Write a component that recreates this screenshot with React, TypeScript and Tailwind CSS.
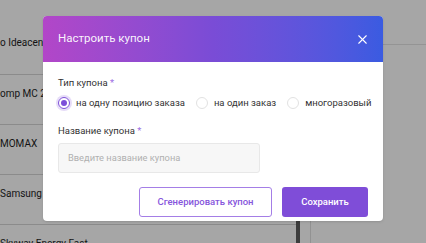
import { X } from "lucide-react";

const rows = ["o Ideacentre", "omp MC 260", "MOMAX", "Samsung", "Skyway Energy Fast"];

function Radio({ checked, label }: { checked?: boolean; label: string }) {
  return (
    <label className="flex flex-none items-center gap-[6px] whitespace-nowrap">
      <span
        className={
          checked
            ? "size-[12px] rounded-full border border-[#7d4fd9] ring-2 ring-[#e6dcf8] grid place-items-center"
            : "size-[12px] rounded-full border border-[#e2e2e2] bg-white"
        }
      >
        {checked && <span className="size-[6px] rounded-full bg-[#7d4fd9]" />}
      </span>
      <span className="text-[9.5px] text-[#333]">{label}</span>
    </label>
  );
}

export default function App() {
  return (
    <div
      className="relative w-[426px] h-[243px] overflow-hidden bg-white"
      style={{ fontFamily: "Roboto, 'Liberation Sans', sans-serif" }}
    >
      {/* page behind the dialog */}
      <div className="flex h-full">
        <div className="w-[296px] pt-[24px]">
          {rows.map((r) => (
            <div key={r} className="h-[50px] border-t border-[#d6d6d6] first:border-t-0 pt-[11px]">
              <p className="text-[10px] text-[#1e1e1e] whitespace-nowrap">{r}</p>
            </div>
          ))}
        </div>
        <div className="w-[4px] pt-[200px]">
          <div className="h-full bg-[#5e5e5e]" />
        </div>
        <div className="w-[11px] pt-[200px]">
          <div className="h-full w-[11px] border-r border-[#e0e0e0]" />
        </div>
        <div className="flex-1 pt-[44px]">
          <div className="border-t border-[#e4e4e4]" />
        </div>
      </div>

      {/* overlay */}
      <div className="absolute inset-0 bg-black/35" />

      {/* dialog */}
      <div className="absolute left-[43px] top-[16px] w-[340px] rounded-[4px] bg-white shadow-sm overflow-hidden">
        <div className="h-[46px] flex items-center justify-between pl-[15px] pr-[13px] bg-linear-to-r from-[#b246c8] via-[#7a4cd6] to-[#3a5be1]">
          <span className="text-[11.5px] text-white/95">Настроить купон</span>
          <X className="size-[15px] text-white" strokeWidth={1.75} />
        </div>
        <div className="px-[15px] pt-[14px] pb-[4px]">
          <p className="text-[9.5px] text-[#333] leading-[14px]">
            Тип купона <span className="text-[#9d6fe3]">*</span>
          </p>
          <div className="mt-[6px] h-[14px] flex items-center gap-[11px]">
            <Radio checked label="на одну позицию заказа" />
            <Radio label="на один заказ" />
            <Radio label="многоразовый" />
          </div>
          <p className="mt-[14px] text-[9.5px] text-[#333] leading-[14px]">
            Название купона <span className="text-[#9d6fe3]">*</span>
          </p>
          <div className="mt-[5px] w-[202px] h-[30px] rounded-[3px] border border-[#e8e8e8] bg-[#f7f7f7] flex items-center pl-[9px]">
            <span className="text-[9.3px] text-[#b0b0b0]">Введите название купона</span>
          </div>
          <div className="mt-[14px] flex justify-end gap-[10px]">
            <button className="w-[133px] h-[30px] rounded-[3px] border border-[#a47ee6] bg-white text-[9.5px] font-medium text-[#8656dc]">
              Сгенерировать купон
            </button>
            <button className="w-[86px] h-[30px] rounded-[3px] bg-[#7f4dd8] text-[9.5px] font-medium text-white">
              Сохранить
            </button>
          </div>
        </div>
      </div>
    </div>
  );
}
